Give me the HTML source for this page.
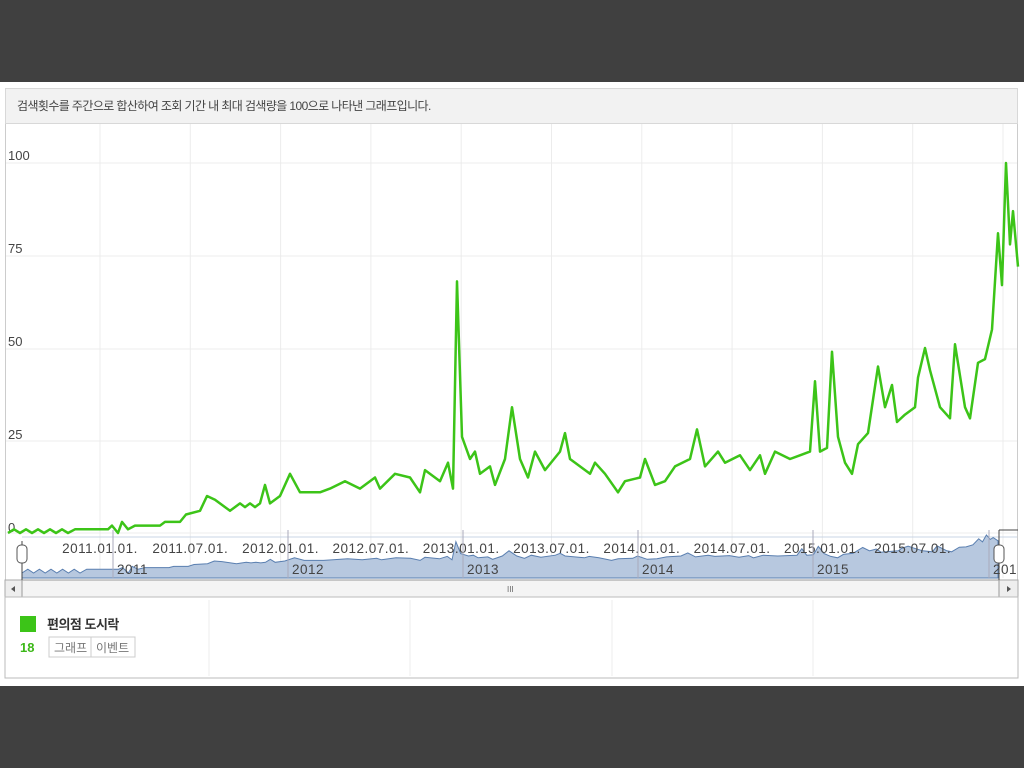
<!DOCTYPE html>
<html><head><meta charset="utf-8"><style>
body{margin:0;width:1024px;height:768px;background:#404040;overflow:hidden;font-family:"Liberation Sans","Noto Sans CJK KR",sans-serif;}
#p{position:absolute;left:0;top:82px;width:1024px;height:604px;background:#fff;}
#hd{position:absolute;left:5px;top:6px;width:1013px;height:36px;background:#f2f2f2;border:1px solid #d8d8d8;box-sizing:border-box;font-size:12px;color:#444;line-height:34px;padding-left:11px;letter-spacing:-0.6px}
svg{position:absolute;left:0;top:0}
</style></head><body>
<div id="p"><div id="hd">검색횟수를 주간으로 합산하여 조회 기간 내 최대 검색량을 100으로 나타낸 그래프입니다.</div></div>
<svg width="1024" height="768" id="s" font-family="Liberation Sans, Noto Sans CJK KR, sans-serif">
<rect x="5" y="124" width="1" height="472" fill="#ccc"/>
<rect x="1017" y="124" width="1" height="472" fill="#ccc"/>
<g id="grid" stroke="#ececec" stroke-width="1"></g>
<g font-size="13" fill="#444"><text x="8" y="160">100</text><text x="8" y="253">75</text><text x="8" y="346">50</text><text x="8" y="439">25</text><text x="8" y="532">0</text></g>
<path id="g" fill="none" stroke="#3cc418" stroke-width="2.5" stroke-linejoin="round"/>
<line x1="22" y1="537" x2="1017" y2="537" stroke="#c8d4e4"/>
<path id="na" fill="#b7c8df" stroke="#5a7fb0" stroke-width="1"/>
<g id="nl" font-size="13.5" fill="#444" letter-spacing="0.5"></g>
<rect x="5" y="580" width="1013" height="17" fill="#eee" stroke="#aaa"/>
<rect x="22" y="580" width="977" height="17" fill="#f4f4f4" stroke="#999"/>
<text x="507" y="592" font-size="8" fill="#666">III</text>
<path d="M15 586 l-4 3 4 3z" fill="#555"/><path d="M1007 586 l4 3 -4 3z" fill="#555"/>
<line x1="22" y1="541" x2="22" y2="580" stroke="#444"/>
<line x1="999" y1="530" x2="999" y2="580" stroke="#444"/><line x1="999" y1="530" x2="1018" y2="530" stroke="#444"/>
<rect x="17" y="545" width="10" height="18" rx="4" fill="#fff" stroke="#555"/>
<rect x="994" y="545" width="10" height="18" rx="4" fill="#fff" stroke="#555"/>
<rect x="5" y="597" width="1013" height="81" fill="none" stroke="#bbb"/>
<g stroke="#eee"><line x1="209" y1="600" x2="209" y2="676"/><line x1="410" y1="600" x2="410" y2="676"/><line x1="612" y1="600" x2="612" y2="676"/><line x1="813" y1="600" x2="813" y2="676"/></g>
<rect x="20" y="616" width="16" height="16" fill="#3cc418"/>
<text x="47" y="629" font-size="13" font-weight="bold" fill="#333" letter-spacing="-0.5">편의점 도시락</text>
<text x="20" y="652" font-size="13" font-weight="bold" fill="#3cb818">18</text>
<rect x="49" y="637" width="86" height="20" fill="#fff" stroke="#ccc"/><line x1="91" y1="637" x2="91" y2="657" stroke="#ccc"/>
<text x="54" y="652" font-size="12" fill="#777">그래프</text><text x="96" y="652" font-size="12" fill="#777">이벤트</text>
</svg>
<script>
var d=[8,0,14,1,20,0,26,1,32,0,38,1,44,0,50,1,56,0,62,1,68,0,75,1,100,1,108,1,112,2,118,0,122,3,128,1,135,2,160,2,165,3,180,3,186,5,200,6,207,10,215,9,230,6,240,8,245,7,250,8,255,7,260,8,265,13,270,8,280,10,290,16,300,11,320,11,330,12,345,14,360,12,375,15,380,12,395,16,410,15,420,11,425,17,440,14,448,19,453,12,457,68,462,26,470,20,475,22,480,16,490,18,495,13,505,20,512,34,520,20,528,15,535,22,545,17,560,22,565,27,570,20,590,16,595,19,605,16,618,11,625,14,640,15,645,20,655,13,665,14,675,18,690,20,697,28,705,18,718,22,725,19,740,21,750,17,760,21,765,16,775,22,790,20,800,21,810,22,815,41,820,22,827,23,832,49,838,26,845,19,852,16,858,24,868,27,878,45,885,34,892,40,897,30,905,32,915,34,918,42,925,50,930,44,940,34,950,31,955,51,965,34,970,31,978,46,985,47,992,55,998,81,1002,67,1006,100,1010,78,1013,87,1018,72];
var g='',n='M22 578';
for(var i=0;i<d.length;i+=2){var x=d[i],v=d[i+1];g+=(i?'L':'M')+x+' '+(533-v*3.7).toFixed(1);n+='L'+(22+(x-8)*976/1010).toFixed(1)+' '+(573-Math.sqrt(v)*3.8).toFixed(1);}
n+='L998 578Z';
document.getElementById('g').setAttribute('d',g);document.getElementById('na').setAttribute('d',n);
var gr='';[163,256,349,441,533].forEach(function(y){gr+='<line x1="6" y1="'+y+'" x2="1017" y2="'+y+'"/>';});
for(var k=0;k<11;k++){var x=100+k*90.3;gr+='<line x1="'+x+'" y1="124" x2="'+x+'" y2="578"/>';}
document.getElementById('grid').innerHTML=gr;
var L=['2011.01.01.','2011.07.01.','2012.01.01.','2012.07.01.','2013.01.01.','2013.07.01.','2014.01.01.','2014.07.01.','2015.01.01.','2015.07.01.'],s='';
L.forEach(function(t,k){s+='<text x="'+(100+k*90.3)+'" y="553" text-anchor="middle">'+t+'</text>';});
[['2011',117],['2012',292],['2013',467],['2014',642],['2015',817],['201',993]].forEach(function(a){s+='<line x1="'+(a[1]-4)+'" y1="530" x2="'+(a[1]-4)+'" y2="578" stroke="#aab"/><text x="'+a[1]+'" y="574">'+a[0]+'</text>';});
document.getElementById('nl').innerHTML=s;
</script>
</body></html>
